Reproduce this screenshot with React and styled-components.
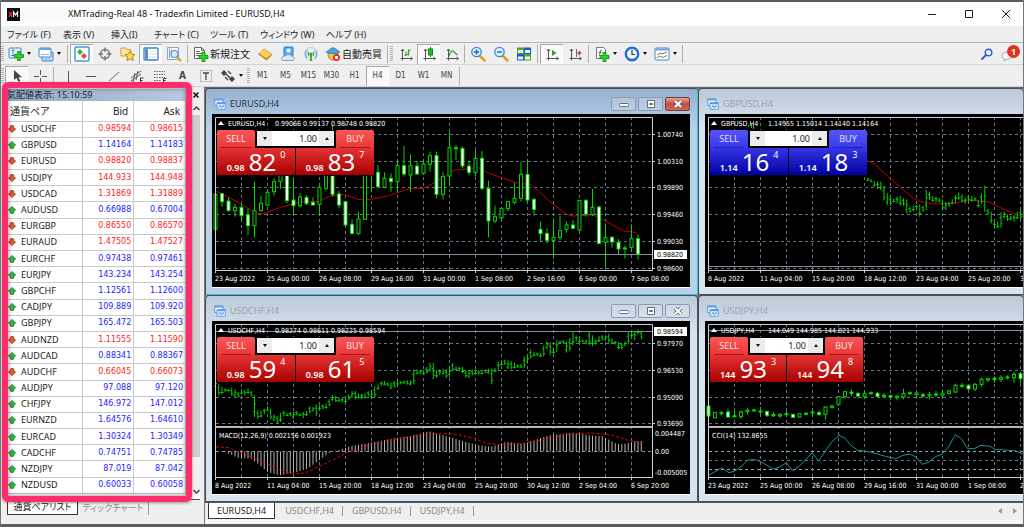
import { useState } from "react"
import styled, { createGlobalStyle, css } from "styled-components"

const GlobalStyle = createGlobalStyle`
	* {
		box-sizing: border-box;
	}
	body {
		margin: 0;
		background: #5c5c60;
		font-family: "Noto Sans", "Noto Sans CJK JP", sans-serif;
		font-size: 9px;
		line-height: 12px;
		color: #222222;
	}
	button, input {
		font: inherit;
		color: inherit;
		margin: 0;
		padding: 0;
		border: 0;
		background: none;
	}
`

/* ---------- data ---------- */

const QUOTES = [
	["USDCHF", "0.98594", "0.98615", "down"],
	["GBPUSD", "1.14164", "1.14183", "up"],
	["EURUSD", "0.98820", "0.98837", "down"],
	["USDJPY", "144.933", "144.948", "down"],
	["USDCAD", "1.31869", "1.31889", "down"],
	["AUDUSD", "0.66988", "0.67004", "up"],
	["EURGBP", "0.86550", "0.86570", "down"],
	["EURAUD", "1.47505", "1.47527", "down"],
	["EURCHF", "0.97438", "0.97461", "up"],
	["EURJPY", "143.234", "143.254", "up"],
	["GBPCHF", "1.12561", "1.12600", "up"],
	["CADJPY", "109.889", "109.920", "up"],
	["GBPJPY", "165.472", "165.503", "up"],
	["AUDNZD", "1.11555", "1.11590", "down"],
	["AUDCAD", "0.88341", "0.88367", "up"],
	["AUDCHF", "0.66045", "0.66073", "down"],
	["AUDJPY", "97.088", "97.120", "up"],
	["CHFJPY", "146.972", "147.012", "up"],
	["EURNZD", "1.64576", "1.64610", "up"],
	["EURCAD", "1.30324", "1.30349", "up"],
	["CADCHF", "0.74751", "0.74785", "up"],
	["NZDJPY", "87.019", "87.042", "up"],
	["NZDUSD", "0.60033", "0.60058", "up"],
]

/* candles: high, low, body top, body bottom, filled (thirds of a pixel) */
const EURUSD_CANDLES = [
	[253, 437, 328, 433, 0], [325, 365, 326, 350, 1], [337, 380, 348, 377, 1],
	[357, 395, 367, 377, 0], [357, 410, 367, 392, 1], [370, 450, 390, 422, 1],
	[290, 457, 377, 422, 0], [333, 380, 355, 377, 0], [312, 363, 322, 360, 0],
	[280, 332, 290, 320, 0], [270, 312, 270, 290, 0], [270, 355, 270, 347, 1],
	[283, 387, 345, 362, 1], [325, 367, 336, 362, 0], [330, 360, 337, 356, 1],
	[337, 362, 352, 360, 1], [300, 388, 307, 358, 0], [260, 315, 270, 310, 0],
	[120, 335, 265, 328, 1], [318, 370, 327, 360, 1], [347, 422, 350, 420, 1],
	[403, 450, 418, 445, 1], [380, 450, 402, 445, 0], [230, 405, 230, 403, 0],
	[240, 322, 250, 270, 0], [240, 308, 262, 305, 1], [262, 310, 280, 307, 0],
	[265, 320, 280, 290, 1], [225, 322, 242, 290, 0], [183, 275, 242, 267, 1],
	[208, 322, 242, 270, 0], [228, 270, 243, 267, 1], [225, 270, 237, 265, 0],
	[200, 260, 212, 238, 0], [200, 340, 212, 328, 1], [260, 343, 275, 328, 0],
	[138, 300, 188, 273, 0], [180, 225, 188, 191, 0], [185, 250, 190, 243, 1],
	[228, 270, 243, 262, 1], [195, 275, 220, 262, 0], [198, 315, 220, 310, 1],
	[287, 457, 310, 408, 1], [362, 413, 395, 408, 0], [368, 402, 370, 398, 0],
	[348, 378, 350, 371, 0], [293, 358, 340, 352, 0], [230, 350, 268, 340, 0],
	[225, 357, 268, 345, 1], [340, 392, 343, 373, 1], [410, 470, 433, 446, 1],
	[430, 475, 445, 466, 1], [400, 522, 457, 466, 0], [392, 465, 437, 457, 0],
	[410, 443, 420, 433, 0], [405, 432, 420, 430, 1], [345, 440, 346, 435, 0],
	[343, 395, 346, 387, 1], [312, 393, 367, 388, 0], [362, 477, 366, 476, 1],
	[415, 547, 458, 472, 0], [453, 488, 457, 471, 1], [462, 507, 472, 492, 1],
	[482, 520, 489, 492, 1], [418, 502, 461, 487, 0], [448, 523, 461, 507, 1],
]

const EURUSD_AVERAGE = [
	[32, 317], [110, 358], [150, 382], [170, 387], [230, 366], [290, 350],
	[340, 350], [370, 335], [415, 328], [440, 336], [462, 344], [500, 343],
	[550, 332], [610, 312], [655, 310], [694, 290], [735, 262], [752, 255],
	[780, 253], [820, 247], [845, 262], [895, 280], [935, 293], [980, 300],
	[1035, 350], [1085, 388], [1105, 393], [1165, 390], [1205, 410],
	[1255, 438], [1280, 440], [1297, 445],
]

/* bars: high, low (thirds of a pixel) */
const GBPUSD_BARS = [
	[278, 288], [283, 292], [288, 305], [290, 312], [290, 315], [303, 347],
	[325, 360], [335, 362], [340, 352], [335, 355], [333, 362], [340, 362],
	[343, 385], [365, 383], [362, 378], [360, 372], [358, 395], [362, 380],
	[315, 375], [320, 345], [333, 350], [335, 352], [338, 352], [343, 377],
	[350, 375], [350, 365], [343, 358], [330, 355], [322, 345], [328, 352],
	[338, 355], [330, 348], [333, 350], [338, 348], [345, 367], [325, 357],
	[302, 380], [372, 388], [380, 415], [410, 432], [410, 430], [382, 428],
	[380, 400], [388, 408], [392, 405], [390, 410], [380, 403], [373, 405],
	[390, 442],
]

const GBPUSD_AVERAGE = [
	[520, 228], [540, 238], [580, 275], [620, 310], [655, 340], [685, 352],
	[730, 357], [780, 354], [820, 345], [880, 350], [930, 375], [984, 395],
]

const USDCHF_BARS = [
	[267, 287], [275, 310], [285, 307], [290, 300], [290, 298], [287, 312],
	[292, 315], [300, 317], [292, 307], [295, 310], [290, 305], [297, 313],
	[310, 375], [355, 380], [357, 377], [350, 367], [343, 357], [350, 383],
	[367, 387], [372, 393], [363, 390], [357, 373], [363, 373], [360, 372],
	[360, 380], [357, 370], [363, 372], [360, 378], [357, 372], [343, 363],
	[345, 358], [337, 372], [340, 352], [338, 352], [335, 350], [322, 343],
	[310, 327], [312, 330], [317, 330], [318, 332], [317, 333], [307, 323],
	[297, 317], [297, 322], [305, 320], [305, 322], [303, 320], [298, 313],
	[298, 320], [283, 317], [277, 293], [268, 283], [267, 280], [272, 282],
	[272, 292], [267, 287], [263, 280], [268, 277], [265, 275], [265, 278],
	[265, 280], [232, 277], [232, 247], [235, 247], [235, 248], [225, 245],
	[212, 240], [213, 262], [235, 257], [232, 250], [230, 248], [232, 258],
	[225, 255], [213, 237], [223, 235], [225, 237], [225, 243], [233, 257],
	[235, 258], [232, 250], [232, 248], [235, 250], [235, 247], [232, 243],
	[230, 245], [230, 277], [228, 240], [210, 237], [210, 220], [203, 218],
	[205, 232], [208, 232], [212, 230], [218, 228], [215, 228], [193, 228],
	[190, 215], [172, 200], [180, 193], [182, 193], [183, 195], [160, 193],
	[148, 172], [150, 190], [168, 185], [145, 180], [145, 153], [145, 155],
	[148, 182], [138, 178], [118, 160], [130, 148], [140, 152], [143, 150],
	[143, 157], [118, 160], [130, 162], [143, 158], [132, 150], [130, 145],
	[130, 145], [125, 152], [140, 157], [147, 158], [150, 172], [152, 172],
	[148, 163], [120, 158], [118, 135], [118, 145], [112, 125], [115, 142],
]

const MACD = [
	[33, 478], [60, 480], [80, 488], [100, 497], [140, 500], [160, 515],
	[190, 540], [225, 550], [270, 542], [310, 530], [350, 500], [380, 480],
	[400, 475], [440, 462], [500, 452], [560, 440], [620, 432], [674, 418],
	[735, 435], [785, 450], [825, 460], [860, 464], [905, 450], [955, 455],
	[995, 443], [1035, 430], [1105, 422], [1155, 430], [1195, 433],
	[1235, 455], [1255, 457], [1295, 447], [1320, 447],
]

const MACD_SIGNAL = [
	[33, 465], [70, 467], [110, 483], [160, 503], [240, 540], [270, 545],
	[300, 543], [360, 515], [430, 480], [500, 457], [580, 440], [640, 430],
	[700, 425], [735, 425], [760, 428], [800, 438], [850, 455], [900, 458],
	[960, 453], [1030, 440], [1100, 425], [1160, 423], [1215, 428],
	[1270, 445], [1315, 452],
]

const USDJPY_CANDLES = [
	[340, 395, 342, 372, 1], [360, 378, 362, 377, 0], [357, 370, 362, 364, 0],
	[350, 377, 360, 375, 1], [357, 377, 371, 373, 0], [355, 380, 360, 374, 0],
	[347, 368, 355, 359, 0], [350, 357, 354, 356, 0], [345, 370, 357, 360, 0],
	[357, 375, 358, 370, 1], [360, 375, 368, 371, 1], [363, 378, 368, 372, 0],
	[357, 370, 365, 367, 0], [365, 376, 367, 376, 1], [363, 376, 365, 375, 0],
	[360, 370, 364, 366, 0], [355, 370, 360, 362, 0], [355, 372, 362, 367, 1],
	[343, 383, 345, 367, 0], [338, 350, 342, 346, 0], [312, 342, 314, 337, 0],
	[297, 320, 299, 314, 0], [293, 312, 300, 304, 1], [300, 320, 305, 312, 1],
	[298, 318, 305, 313, 0], [298, 308, 302, 304, 0], [300, 315, 304, 313, 1],
	[303, 318, 310, 312, 0], [308, 325, 311, 315, 1], [308, 325, 313, 317, 0],
	[290, 322, 305, 315, 0], [298, 308, 302, 304, 0], [298, 315, 303, 308, 0],
	[303, 318, 308, 312, 1], [300, 322, 308, 312, 0], [297, 315, 306, 308, 0],
	[293, 315, 304, 310, 0], [293, 308, 297, 304, 0], [275, 302, 280, 300, 0],
	[273, 288, 280, 282, 0], [278, 295, 280, 291, 1], [273, 297, 277, 291, 0],
	[257, 285, 262, 277, 0], [257, 270, 260, 264, 0], [253, 272, 259, 263, 1],
	[250, 270, 257, 262, 0], [250, 262, 255, 257, 0], [240, 272, 247, 257, 0],
	[240, 275, 245, 260, 1],
]

const CCI = [
	[41, 550], [80, 528], [102, 542], [118, 538], [140, 522], [157, 505],
	[176, 502], [196, 508], [235, 531], [255, 525], [274, 512], [293, 537],
	[312, 523], [351, 483], [371, 507], [410, 450], [432, 430], [449, 438],
	[468, 460], [488, 475], [527, 480], [560, 490], [602, 500], [624, 490],
	[645, 486], [663, 495], [682, 517], [702, 510], [721, 494], [741, 487],
	[760, 465], [781, 428], [799, 440], [818, 470], [838, 470], [857, 460],
	[885, 463], [900, 472], [960, 476], [990, 489],
]

const SHORT_DATES = [
	"23 Aug 2022", "25 Aug 00:00", "26 Aug 08:00", "29 Aug 16:00",
	"31 Aug 00:00", "1 Sep 08:00", "2 Sep 16:00", "6 Sep 00:00", "7 Sep 08:00",
]
const LONG_DATES = [
	"8 Aug 2022", "11 Aug 04:00", "15 Aug 20:00", "18 Aug 12:00",
	"23 Aug 04:00", "25 Aug 20:00", "30 Aug 12:00", "2 Sep 04:00", "6 Sep 20:00",
]

const FULL_GRID = [148, 227, 307, 387, 468, 548]
const HALF_GRID = [154, 234, 314, 394]

const CHARTS = [
	{
		symbol: "EURUSD,H4",
		quote: "0.99066 0.99137 0.98748 0.98820",
		active: true,
		dates: SHORT_DATES,
		grid: FULL_GRID,
		prices: ["1.00740", "1.00310", "0.99890", "0.99460", "0.99030", "0.98600"],
		last: { y: 508, text: "0.98820" },
		shift: 7,
		candles: EURUSD_CANDLES,
		average: EURUSD_AVERAGE,
		base: "0.98",
		sell: ["82", "0"],
		buy: ["83", "7"],
	},
	{
		symbol: "GBPUSD,H4",
		quote: "1.14955 1.15014 1.14140 1.14164",
		blue: true,
		dates: LONG_DATES,
		grid: FULL_GRID,
		last: { y: 545 },
		shift: 10,
		bars: GBPUSD_BARS,
		firstBar: 49,
		average: GBPUSD_AVERAGE,
		base: "1.14",
		sell: ["16", "4"],
		buy: ["18", "3"],
	},
	{
		symbol: "USDCHF,H4",
		quote: "0.98274 0.98611 0.98225 0.98594",
		dates: LONG_DATES,
		grid: HALF_GRID,
		prices: ["0.97970", "0.96530", "0.95090", "0.93690"],
		last: { y: 118, text: "0.98594" },
		shift: 7,
		bars: USDCHF_BARS,
		firstBar: 0,
		macd: true,
		base: "0.98",
		sell: ["59", "4"],
		buy: ["61", "5"],
	},
	{
		symbol: "USDJPY,H4",
		quote: "144.049 144.985 144.021 144.933",
		narrow: true,
		dates: SHORT_DATES,
		grid: HALF_GRID,
		last: { y: 116 },
		shift: 10,
		candles: USDJPY_CANDLES,
		cci: true,
		base: "144",
		sell: ["93", "3"],
		buy: ["94", "8"],
	},
]

/* ---------- icons ---------- */

const Icon = ({ children, size = 16 }) => (
	<svg width={size} height={size} viewBox="0 0 16 16" fill="none" aria-hidden="true">
		{children}
	</svg>
)

const Plus = ({ x = 0, y = 0 }) => (
	<path
		d={`M${x + 3} ${y}h3v3h3v3h-3v3h-3v-3h-3v-3h3z`}
		fill="#2bd42b"
		stroke="#0a8a0a"
		strokeWidth="0.8"
	/>
)

const Axes = ({ children }) => (
	<Icon>
		<path d="M4.500 3v11.500M2.500 12.500h12M3 5l1.500-2 1.500 2M12.500 11l2 1.500-2 1.500" stroke="#555" />
		{children}
	</Icon>
)

const Lens = ({ sign }) => (
	<Icon>
		<path d="M10 10l4.500 4.500" stroke="#d9a520" strokeWidth="2.600" strokeLinecap="round" />
		<circle cx="6.500" cy="6" r="4.700" fill="#d8efff" stroke="#3a86d0" strokeWidth="1.300" />
		<path d={sign === "+" ? "M4 6h5M6.500 3.500v5" : "M4 6h5"} stroke="#1f66bb" strokeWidth="1.400" />
	</Icon>
)

const icons = {
	addChart: (
		<Icon>
			<rect x="1" y="2" width="12" height="10" rx="1" fill="#eaf5ff" stroke="#3f88cc" />
			<path d="M5 3.500v7M3.500 5L5 3.500 6.500 5M3 9.500h7" stroke="#3f88cc" />
			<Plus x={6.5} y={5.5} />
		</Icon>
	),
	profiles: (
		<Icon>
			<rect x="4" y="6" width="11" height="9" rx="1" fill="#cfe4f8" stroke="#3f78bb" />
			<rect x="1" y="2" width="12" height="9" rx="1" fill="#fff" stroke="#3f88cc" />
			<path d="M1.500 3h11" stroke="#5fa5e4" strokeWidth="2" />
			<path d="M3 8.500h8M6 13h7" stroke="#8ab9e6" />
		</Icon>
	),
	market: (
		<Icon>
			<rect x="1" y="1" width="14" height="14" rx="1" fill="#fff" stroke="#4a97df" strokeWidth="1.500" />
			<path d="M6 3l3 3-3 3-3-3z" fill="#35b535" />
			<path d="M10 7l3 3-3 3-3-3z" fill="#e25035" />
		</Icon>
	),
	target: (
		<Icon>
			<circle cx="8" cy="8" r="4.500" stroke="#777" strokeWidth="1.400" />
			<path d="M8 1.500v4.500M8 10v4.500M1.500 8h4.500M10 8h4.500" stroke="#777" strokeWidth="1.400" />
		</Icon>
	),
	favorites: (
		<Icon>
			<path d="M1 2h5l1 1.500h4V10H1z" fill="#ffe9a0" stroke="#cf9f36" />
			<path d="M10 5l1.600 3.200 3.400.4-2.500 2.400.7 3.500-3.200-1.700-3.200 1.700.7-3.500L5 8.600l3.400-.4z" fill="#ffd94a" stroke="#b8841d" />
		</Icon>
	),
	terminal: (
		<Icon>
			<rect x="1" y="2" width="14" height="12" rx="1" fill="#fff" stroke="#3f7fc4" strokeWidth="1.300" />
			<path d="M2 3h3v10H2z" fill="#4c8fd6" />
			<path d="M6.500 5h7M6.500 8h7M6.500 11h7" stroke="#c9dcf0" />
			<path d="M3 5h1M3 8h1" stroke="#e55" />
		</Icon>
	),
	tester: (
		<Icon>
			<path d="M1.500 1.500h11v12h-11z" fill="#f4f8ff" stroke="#8aa6c8" />
			<path d="M3.500 3v9M5.500 4v7" stroke="#6aa0dc" />
			<path d="M11 11l3.500 3.500" stroke="#d9a520" strokeWidth="2.200" strokeLinecap="round" />
			<circle cx="8.500" cy="8" r="3.500" fill="#d5ecff" stroke="#6c8fb8" strokeWidth="1.200" />
		</Icon>
	),
	order: (
		<Icon>
			<path d="M1.500 1.500h7l3 3v8h-10z" fill="#fff" stroke="#666" />
			<path d="M8.500 1.500v3h3M3 5.500h4M3 7.500h6M3 9.500h4" stroke="#666" />
			<Plus x={6} y={6.5} />
		</Icon>
	),
	gold: (
		<Icon>
			<path d="M1.500 8L7 3l8 5.500-5.500 5.500z" fill="#d99a22" stroke="#9d6a0b" strokeWidth="0.800" />
			<path d="M2 7.500L7 3l7.500 5L9.500 12z" fill="#ffd05c" />
		</Icon>
	),
	community: (
		<Icon>
			<rect x="4" y="1" width="9" height="9" rx="1" fill="#58b1ee" stroke="#1d76c4" />
			<circle cx="8.500" cy="4.500" r="1.900" fill="#fff" />
			<path d="M2.500 14.500c-2-1-1-4 1.500-4C6 8 11 8 12 10.500c3 0 3 3.500 1 4z" fill="#dbe9f7" stroke="#7d9fc4" />
		</Icon>
	),
	signal: (
		<Icon>
			<circle cx="8" cy="8" r="6.500" stroke="#b4cbe0" />
			<path d="M4.500 12a5 5 0 010-8M11.500 12a5 5 0 000-8" stroke="#6fb2e4" strokeWidth="1.300" />
			<path d="M6 10a3 3 0 010-4M10 10a3 3 0 000-4" stroke="#46b04a" strokeWidth="1.200" />
			<circle cx="8" cy="8" r="1.600" fill="#2ca52c" />
			<path d="M8 9v6" stroke="#2ca52c" strokeWidth="1.800" />
		</Icon>
	),
	auto: (
		<Icon>
			<circle cx="8" cy="9" r="5" fill="#f2c544" stroke="#b88316" />
			<path d="M1 6c3 2 11 2 14 0-1-1-2-1-3-1.500C11 1 5 1 4 4.500 3 5 2 5 1 6z" fill="#4aa2df" stroke="#1f71b2" strokeWidth="0.800" />
			<circle cx="11.500" cy="11.500" r="3.500" fill="#e4321c" />
			<path d="M10 10h3v3h-3z" fill="#fff" />
		</Icon>
	),
	barChart: (
		<Axes>
			<path d="M8 10V5.500M6.500 9.500h1.500M10.500 3.500v6M8 8.500h2.500M10.500 4.500h2" stroke="#27a327" strokeWidth="1.200" />
		</Axes>
	),
	candleChart: (
		<Axes>
			<path d="M9.500 1v10" stroke="#128a12" />
			<rect x="7.500" y="3" width="4" height="6" fill="#22c022" stroke="#128a12" />
		</Axes>
	),
	lineChart: (
		<Axes>
			<path d="M5 10c2-6 4-6 5-4l3.500 3" stroke="#27a327" strokeWidth="1.200" />
		</Axes>
	),
	zoomIn: <Lens sign="+" />,
	zoomOut: <Lens sign="-" />,
	tile: (
		<Icon>
			<path d="M1 1.500h7v6.500H1zM8 8h7v6.500H8z" fill="#4aa82c" />
			<path d="M8 1.500h7v6.500H8zM1 8h7v6.500H1z" fill="#2456bf" />
			<path d="M2 4h5v3H2zM9 4h5v3H9zM2 10.500h5v3H2zM9 10.500h5v3H9z" fill="#eef5ff" />
		</Icon>
	),
	scroll: (
		<Axes>
			<path d="M8 4l4.500 3L8 10z" fill="#22a922" />
		</Axes>
	),
	shiftEnd: (
		<Axes>
			<path d="M9.500 3v8" stroke="#3a70b8" />
			<path d="M14.500 7h-3M13 5l-2 2 2 2" stroke="#cc4325" strokeWidth="1.300" />
		</Axes>
	),
	indicator: (
		<Icon>
			<path d="M2.500 1.500h7l2 2v9h-9z" fill="#fff" stroke="#777" />
			<path d="M8 4C5.500 3 6.500 9 5 10M4.500 6.500h3" stroke="#555" />
			<Plus x={6} y={6.5} />
		</Icon>
	),
	clock: (
		<Icon>
			<circle cx="8" cy="8" r="6.200" fill="#eef7ff" stroke="#1f6fcb" strokeWidth="2.400" />
			<path d="M8 4v4.500h3" stroke="#335" strokeWidth="1.200" />
		</Icon>
	),
	template: (
		<Icon>
			<rect x="1" y="2" width="14" height="12" rx="1" fill="#fff" stroke="#4a88c8" />
			<path d="M1.500 3.500h13" stroke="#66a6e2" strokeWidth="2" />
			<path d="M3 9l3-2 2 1 5-2" stroke="#c2573d" />
			<path d="M3 12l3-2 3 1.500 4-2" stroke="#3b9f4a" />
		</Icon>
	),
	cursor: (
		<Icon>
			<path d="M5 2v10l2.500-2 2 4 1.800-1-2-3.800H13z" fill="#444" />
		</Icon>
	),
	cross: (
		<Icon>
			<path d="M8.500 2v5M8.500 10v5M2 8.500h5M10 8.500h5" stroke="#555" />
		</Icon>
	),
	vertical: (
		<Icon>
			<path d="M8.500 3v11" stroke="#555" />
		</Icon>
	),
	horizontal: (
		<Icon>
			<path d="M3 8.500h10" stroke="#555" />
		</Icon>
	),
	trend: (
		<Icon>
			<path d="M3 13L13 4" stroke="#666" />
		</Icon>
	),
	channel: (
		<Icon>
			<path d="M2 10l10-7M2 13l10-7M4 14l2-9M7 12l2-9" stroke="#555" />
			<path d="M14.500 10h-3v5h3M11.500 12.500h2" stroke="#333" />
		</Icon>
	),
	fibo: (
		<Icon>
			<path d="M2 3.500h11M2 6.500h11M2 9.500h11M2 12.500h7" stroke="#666" strokeDasharray="1.500 1" />
			<path d="M14.500 10.500h-3v4.500M11.500 12.500h2" stroke="#333" />
		</Icon>
	),
	label: (
		<Icon>
			<path d="M2.500 2.500h11v11h-11z" stroke="#888" strokeDasharray="1 1" />
			<path d="M5 5h6M8 5v7" stroke="#444" strokeWidth="1.300" />
		</Icon>
	),
	shapes: (
		<Icon>
			<path d="M1 5l3-3 3 3-3 3zM9 11l3-3 3 3-3 3z" fill="#444" />
			<path d="M8 3l3 3M5 9l3 3M6 6l4 4" stroke="#444" strokeWidth="1.300" />
		</Icon>
	),
}

const ChartGlyph = () => (
	<Icon size={12}>
		<rect x="1" y="1" width="11" height="9" rx="1" fill="#fff" stroke="#5a9be6" strokeWidth="1.400" />
		<path d="M1 2.500h11" stroke="#5a9be6" strokeWidth="2" />
		<rect x="4" y="6" width="11" height="9" rx="1" fill="#fff" stroke="#5a9be6" strokeWidth="1.400" />
		<path d="M4 7.500h11M6 13l2-3 2 3 2-3 1 2" stroke="#5a9be6" strokeWidth="1.400" />
	</Icon>
)

const TickMark = ({ direction }) => (
	<svg width="8" height="8" viewBox="0 0 8 8" role="img" aria-label={direction}>
		{direction === "up" ? (
			<path d="M4 .4l3.600 3.600-1.800.8V7L4 7.600 2.200 7V4.800L.4 4z" fill="#2fb83c" stroke="#0e7a1c" strokeWidth="0.800" />
		) : (
			<path d="M4 7.600l3.600-3.600-1.800-.8V1L4 .4 2.200 1v2.200L.4 4z" fill="#ea5a2c" stroke="#9b2c0c" strokeWidth="0.800" />
		)}
	</svg>
)

/* ---------- chart drawing ---------- */

const py = (v) => v / 3 - 29

const toPoints = (list, shift) =>
	list.map(([x, y]) => `${x / 3 - shift},${py(y)}`).join(" ")

const valueAt = (list, x) => {
	const next = list.findIndex((p) => p[0] >= x)
	if (next < 1) return list[0][1]
	const [x0, y0] = list[next - 1]
	const [x1, y1] = list[next]
	return y0 + ((y1 - y0) * (x - x0)) / (x1 - x0)
}

const Candle = ({ x, data }) => {
	const [high, low, top, bottom, filled] = data
	return (
		<g stroke="#00d800">
			<path d={`M${x} ${py(high)}V${py(low)}`} />
			<rect
				x={x - 1.5}
				y={py(top)}
				width="3"
				height={Math.max(1, (bottom - top) / 3)}
				fill={filled ? "#ffffff" : "#000000"}
			/>
		</g>
	)
}

const Plot = ({ chart }) => {
	const { shift, grid, last, dates } = chart
	const right = chart.prices ? 440 : 500
	const split = chart.macd || chart.cci
	const columns = Array.from({ length: 18 }, (_, i) => 29.5 + i * 26).filter((x) => x < right)

	return (
		<StyledPlot role="img" aria-label={chart.symbol}>
			<g stroke="#66727f" strokeDasharray="3 3">
				{columns.map((x) => (
					<path key={x} d={`M${x} 3V156`} />
				))}
				{grid.map((y) => (
					<path key={y} d={`M4 ${Math.round(py(y)) + 0.5}H${right}`} />
				))}
				{chart.cci && <path d="M4 139.500H500" />}
			</g>
			<path d={`M4 ${Math.floor(py(last.y)) + 0.5}H${right}`} stroke="#8390a2" />

			{chart.average && (
				<polyline points={toPoints(chart.average, shift)} fill="none" stroke="#c00000" />
			)}
			{chart.candles?.map((data, i) => (
				<Candle key={i} x={3.5 + i * 6.5} data={data} />
			))}
			{chart.bars && (
				<path
					stroke="#00d000"
					d={chart.bars
						.map(([high, low], i) => {
							const x = 3.5 + (chart.firstBar + i) * 3.25
							const open = py(high) + (low - high) / (i % 2 ? 9 : 4)
							const close = py(low) - (low - high) / (i % 3 ? 12 : 5)
							return `M${x} ${py(high)}V${py(low)}M${x - 1.5} ${open}h1.500M${x} ${close}h1.500`
						})
						.join("")}
				/>
			)}
			{chart.blue && <path d="M3.500 36V45M46.500 10v4M48.500 12v3" stroke="#00d000" />}

			{chart.macd && (
				<>
					<path d="M4 130.500H440" stroke="#8c8c8c" strokeDasharray="3 3" />
					<path
						stroke="#b4b4b4"
						d={Array.from({ length: 132 }, (_, i) => {
							const x = 3.5 + i * 3.25
							return `M${x} 130.500V${py(valueAt(MACD, 33 + i * 9.75))}`
						}).join("")}
					/>
					<polyline points={toPoints(MACD_SIGNAL, shift)} fill="none" stroke="#e00000" strokeDasharray="3 2" />
				</>
			)}
			{chart.cci && (
				<>
					<path d="M4 130.500H500M4 148.500H500" stroke="#9aa3ab" strokeDasharray="3 3" />
					<polyline points={toPoints(CCI, shift)} fill="none" stroke="#1f9090" />
				</>
			)}

			<path d={`M3.500 156.500V3.500H${right}.500V156.500z`} fill="none" stroke="#d0d0d0" />
			{split && <path d={`M3 106H${right + 1}`} stroke="#b8b8b8" strokeWidth="2" />}
			{dates.map((date, i) => (
				<g key={date}>
					<path d={`M${3.5 + i * 52} 157v2`} stroke="#d0d0d0" />
					<text x={3 + i * 52} y="167">{date}</text>
				</g>
			))}
			{chart.prices?.map((price, i) => (
				<g key={price}>
					<path d={`M441 ${Math.round(py(grid[i])) + 0.5}h2`} stroke="#d0d0d0" />
					<text x="445" y={Math.round(py(grid[i])) + 3}>{price}</text>
				</g>
			))}
			{last.text && (
				<>
					<rect x="442" y={Math.round(py(last.y)) - 4} width="33" height="9" fill="#ffffff" />
					<text x="445" y={Math.round(py(last.y)) + 3} className="last">{last.text}</text>
				</>
			)}
			{chart.macd && (
				<>
					<text x="443" y="115">0.004487</text>
					<text x="443" y="133">0.00</text>
					<text x="443" y="154">-0.005005</text>
					<text x="7" y="117">MACD(12,26,9) 0.002156 0.001923</text>
				</>
			)}
			{chart.cci && <text x="7" y="117">CCI(14) 132.8655</text>}
			<path d="M6 11h6l-3-4z" fill="#ffffff" />
			<text x="16" y="12">{chart.symbol}</text>
			<text x="63" y="12">{chart.quote}</text>
		</StyledPlot>
	)
}

/* ---------- pieces ---------- */

const Tool = ({ icon, label, pressed, drop, text }) => (
	<StyledTool type="button" aria-label={label} $pressed={pressed} $drop={drop} $wide={!!text}>
		{icons[icon]}
		{text}
		{drop && <Caret />}
	</StyledTool>
)

const OneClick = ({ chart }) => (
	<StyledOneClick $narrow={chart.narrow}>
		<StyledOrderRow>
			<StyledSide type="button" $blue={chart.blue}>SELL</StyledSide>
			<StyledVolume>
				<button type="button" aria-label="Decrease volume"><Caret /></button>
				<input aria-label={`${chart.symbol} volume`} defaultValue="1.00" />
				<button type="button" aria-label="Increase volume"><Caret $up /></button>
			</StyledVolume>
			<StyledSide type="button" $blue={chart.blue}>BUY</StyledSide>
		</StyledOrderRow>
		<StyledPriceRow>
			{[chart.sell, chart.buy].map(([big, pip], i) => (
				<StyledPrice key={i} type="button" $blue={chart.blue}>
					<small>{chart.base}</small>
					<strong>{big}</strong>
					<sup>{pip}</sup>
				</StyledPrice>
			))}
		</StyledPriceRow>
	</StyledOneClick>
)

const ChartWindow = ({ chart }) => (
	<StyledWindow $active={chart.active}>
		<StyledWindowBar $active={chart.active}>
			<ChartGlyph />
			<span>{chart.symbol}</span>
			{chart.prices && (
				<StyledWindowButtons>
					<StyledWindowButton type="button" aria-label="Minimize">
						<svg width="10" height="8"><rect x="0.500" y="3.500" width="9" height="3" rx="1" fill="#fff" stroke="#66707c" /></svg>
					</StyledWindowButton>
					<StyledWindowButton type="button" aria-label="Maximize">
						<svg width="10" height="8"><path d="M1.500 0.500h7v7h-7zM3.500 3.500h3v1h-3z" fill="#fff" stroke="#66707c" /></svg>
					</StyledWindowButton>
					<StyledWindowButton type="button" aria-label="Close" $close={chart.active}>
						<svg width="10" height="8">
							<path d="M2 1l6 6M8 1L2 7" stroke="#5f6672" strokeWidth="3.600" />
							<path d="M2 1l6 6M8 1L2 7" stroke="#fff" strokeWidth="2" />
						</svg>
					</StyledWindowButton>
				</StyledWindowButtons>
			)}
		</StyledWindowBar>
		<StyledCanvas>
			<Plot chart={chart} />
			<OneClick chart={chart} />
		</StyledCanvas>
	</StyledWindow>
)

const MarketWatch = () => (
	<StyledAside>
		<StyledPanelTitle>
			<span>気配値表示: 15:10:59</span>
			<button type="button" aria-label="Close panel">
				<svg width="6" height="6"><path d="M0.500 0.500l5 5M5.500 0.500l-5 5" stroke="#111" strokeWidth="1.500" /></svg>
			</button>
		</StyledPanelTitle>
		<StyledPanelBody>
			<StyledTable>
				<thead>
					<tr>
						<th scope="col">通貨ペア</th>
						<th scope="col">Bid</th>
						<th scope="col">Ask</th>
					</tr>
				</thead>
				<tbody>
					{QUOTES.map(([name, bid, ask, direction]) => (
						<StyledQuote key={name} $up={direction === "up"}>
							<th scope="row"><TickMark direction={direction} />{name}</th>
							<td>{bid}</td>
							<td>{ask}</td>
						</StyledQuote>
					))}
				</tbody>
			</StyledTable>
			<StyledScroll>
				<svg width="7" height="5"><path d="M0.500 4l3-3 3 3" fill="none" stroke="#444" strokeWidth="1.500" /></svg>
				<StyledThumb />
				<svg width="7" height="5"><path d="M0.500 1l3 3 3-3" fill="none" stroke="#444" strokeWidth="1.500" /></svg>
			</StyledScroll>
		</StyledPanelBody>
		<StyledPanelTabs>
			<StyledPanelTab type="button" $active>通貨ペアリスト</StyledPanelTab>
			<StyledPanelTab type="button">ティックチャート</StyledPanelTab>
		</StyledPanelTabs>
		<StyledHighlight />
	</StyledAside>
)

const App = () => {
	const [tab, setTab] = useState("EURUSD,H4")

	return (
		<StyledFrame>
			<GlobalStyle />
			<StyledTitleBar>
				<svg width="13" height="13" viewBox="0 0 13 13">
					<rect width="13" height="13" fill="#0b0b0b" />
					<path d="M2 4l3 5M5 4L2 9" stroke="#e33" strokeWidth="1.300" />
					<path d="M6.500 9V4l2 3 2-3v5" fill="none" stroke="#fff" strokeWidth="1.200" />
				</svg>
				<StyledAccount />
				<StyledTitle>XMTrading-Real 48 - Tradexfin Limited - EURUSD,H4</StyledTitle>
				<StyledSystemButtons>
					<button type="button" aria-label="Minimize"><svg width="10" height="10"><path d="M1 5.500h8" stroke="#222" /></svg></button>
					<button type="button" aria-label="Maximize"><svg width="10" height="10"><path d="M1.500 1.500h7v7h-7z" fill="none" stroke="#222" /></svg></button>
					<button type="button" aria-label="Close"><svg width="10" height="10"><path d="M1 1l8 8M9 1L1 9" stroke="#222" /></svg></button>
				</StyledSystemButtons>
			</StyledTitleBar>

			<StyledMenu>
				<StyledMenuItem type="button" $width={56}>ファイル (F)</StyledMenuItem>
				<StyledMenuItem type="button" $width={48}>表示 (V)</StyledMenuItem>
				<StyledMenuItem type="button" $width={43}>挿入(I)</StyledMenuItem>
				<StyledMenuItem type="button" $width={56}>チャート (C)</StyledMenuItem>
				<StyledMenuItem type="button" $width={50}>ツール (T)</StyledMenuItem>
				<StyledMenuItem type="button" $width={66}>ウィンドウ (W)</StyledMenuItem>
				<StyledMenuItem type="button" $width={56}>ヘルプ (H)</StyledMenuItem>
			</StyledMenu>

			<StyledToolbar>
				<Grip />
				<Tool icon="addChart" label="New chart" drop />
				<Tool icon="profiles" label="Profiles" drop />
				<Separator />
				<Tool icon="market" label="Market watch" pressed />
				<Tool icon="target" label="Data window" />
				<Tool icon="favorites" label="Navigator" />
				<Tool icon="terminal" label="Terminal" pressed />
				<Tool icon="tester" label="Strategy tester" />
				<Separator />
				<Tool icon="order" text="新規注文" />
				<Tool icon="gold" label="MetaEditor" />
				<Tool icon="community" label="Community" />
				<Tool icon="signal" label="Signals" />
				<Tool icon="auto" text="自動売買" />
				<Separator />
				<Grip />
				<Tool icon="barChart" label="Bar chart" />
				<Tool icon="candleChart" label="Candlesticks" pressed />
				<Tool icon="lineChart" label="Line chart" />
				<Separator $tight />
				<Tool icon="zoomIn" label="Zoom in" />
				<Tool icon="zoomOut" label="Zoom out" />
				<Tool icon="tile" label="Tile windows" />
				<Separator />
				<Tool icon="scroll" label="Auto scroll" pressed />
				<Tool icon="shiftEnd" label="Chart shift" />
				<Separator />
				<Tool icon="indicator" label="Indicators" drop />
				<Tool icon="clock" label="Periods" drop />
				<Tool icon="template" label="Templates" drop />
				<Separator $tight />
				<StyledToolbarEnd>
					<button type="button" aria-label="Search">
						<svg width="12" height="12" viewBox="0 0 12 12" fill="none">
							<path d="M1 11l4-4" stroke="#2e62c9" strokeWidth="2" strokeLinecap="round" />
							<circle cx="7.500" cy="4.500" r="3.300" fill="#eef5ff" stroke="#2e62c9" strokeWidth="1.400" />
						</svg>
					</button>
					<StyledMessages type="button" aria-label="Messages">
						<svg width="14" height="14" viewBox="0 0 14 14"><path d="M1 7c0-4 12-4 12 0 0 3-4 4-7 4l-3 2v-2.500C2 10 1 9 1 7z" fill="#f6f6f8" stroke="#a5a8b0" /></svg>
						<span>1</span>
					</StyledMessages>
				</StyledToolbarEnd>
			</StyledToolbar>

			<StyledToolbar>
				<Grip />
				<Tool icon="cursor" label="Cursor" pressed />
				<Tool icon="cross" label="Crosshair" />
				<Separator />
				<Tool icon="vertical" label="Vertical line" />
				<Tool icon="horizontal" label="Horizontal line" />
				<Tool icon="trend" label="Trendline" />
				<Tool icon="channel" label="Channel" />
				<Tool icon="fibo" label="Fibonacci" />
				<StyledPeriod type="button" $strong>A</StyledPeriod>
				<Tool icon="label" label="Text label" />
				<Tool icon="shapes" label="Arrows" drop />
				<Grip />
				{["M1", "M5", "M15", "M30", "H1", "H4", "D1", "W1", "MN"].map((period) => (
					<StyledPeriod key={period} type="button" $pressed={period === "H4"}>
						{period}
					</StyledPeriod>
				))}
				<Separator $tight />
			</StyledToolbar>

			<StyledMain>
				<MarketWatch />
				<StyledWorkspace>
					<StyledWindows>
						{CHARTS.map((chart) => (
							<ChartWindow key={chart.symbol} chart={chart} />
						))}
					</StyledWindows>
					<StyledTabs>
						{["EURUSD,H4", "USDCHF,H4", "GBPUSD,H4", "USDJPY,H4"].map((name) => (
							<StyledTab key={name} type="button" $active={tab === name} onClick={() => setTab(name)}>
								{name}
							</StyledTab>
						))}
						<StyledTabArrows>
							<button type="button" aria-label="Previous tabs"><svg width="4" height="6"><path d="M4 0v6L0 3z" fill="#999" /></svg></button>
							<button type="button" aria-label="Next tabs"><svg width="4" height="6"><path d="M0 0v6l4-3z" fill="#999" /></svg></button>
						</StyledTabArrows>
					</StyledTabs>
				</StyledWorkspace>
			</StyledMain>
		</StyledFrame>
	)
}

/* ---------- styles ---------- */

const StyledFrame = styled.div`
	display: flex;
	flex-direction: column;
	height: 100vh;
	min-height: 500px;
	padding-top: 2px;
	border: solid #77777b;
	border-width: 0 1px;
	border-bottom: 3px solid #5c5c60;
	background: #efefef;
	box-shadow: inset 0 2px #5c5c60;
	overflow: hidden;
`

const StyledTitleBar = styled.header`
	display: flex;
	align-items: center;
	height: 24px;
	padding: 0 6px;
	background: #ffffff;
	flex-shrink: 0;
`

const StyledAccount = styled.span`
	width: 44px;
	height: 14px;
	margin: 0 2px;
	background: #fafafa;
`

const StyledTitle = styled.h1`
	margin: 0;
	font-size: 9px;
	font-weight: 400;
	color: #111111;
`

const StyledSystemButtons = styled.div`
	display: flex;
	gap: 27px;
	margin-left: auto;
	padding-right: 6px;
	button {
		display: flex;
	}
`

const StyledMenu = styled.nav`
	display: flex;
	height: 17px;
	padding-left: 6px;
	border-bottom: 1px solid #b4b4b4;
	flex-shrink: 0;
`

const StyledMenuItem = styled.button`
	width: ${({ $width }) => $width}px;
	text-align: left;
	white-space: nowrap;
	font-feature-settings: "palt";
	&& {
		line-height: 15px;
	}
`

const StyledToolbar = styled.div`
	display: flex;
	align-items: center;
	height: 22px;
	flex-shrink: 0;
	border-bottom: 1px solid #d2d2d2;
`

const Grip = styled.span`
	width: 3px;
	height: 16px;
	margin: 0 1px 0 0;
	background: repeating-linear-gradient(#b0b0b0 0 1px, #efefef 1px 2px);
`

const Separator = styled.span`
	width: 1px;
	height: 18px;
	margin: 0 ${({ $tight }) => ($tight ? 1 : 2)}px;
	background: #b0b0b0;
`

const Caret = styled.i`
	width: 0;
	height: 0;
	border: 2px solid transparent;
	border-top: ${({ $up }) => ($up ? "0" : "3px solid #111111")};
	border-bottom: ${({ $up }) => ($up ? "3px solid #111111" : "0")};
`

const pressedStyle = css`
	background: #f9f9f9;
	box-shadow: inset 1px 1px #a8a8a8, inset -1px -1px #ffffff;
`

const StyledTool = styled.button`
	display: flex;
	align-items: center;
	justify-content: ${({ $wide, $drop }) => ($wide || $drop ? "flex-start" : "center")};
	gap: ${({ $drop }) => ($drop ? 3 : 1)}px;
	flex-shrink: 0;
	width: ${({ $wide, $drop }) => ($wide ? 63 : $drop ? 30 : 23)}px;
	height: 20px;
	padding-left: ${({ $wide, $drop }) => ($wide || $drop ? 3 : 0)}px;
	white-space: nowrap;
	&& {
		font-size: 10px;
	}
	svg {
		flex-shrink: 0;
	}
	${({ $pressed }) => $pressed && pressedStyle}
`

const StyledPeriod = styled.button`
	width: 23px;
	height: 20px;
	flex-shrink: 0;
	color: #444444;
	&& {
		font-family: "DejaVu Sans Condensed", "DejaVu Sans", sans-serif;
		font-size: ${({ $strong }) => ($strong ? 10 : 8)}px;
		font-weight: ${({ $strong }) => ($strong ? 700 : 400)};
	}
	${({ $pressed }) => $pressed && pressedStyle}
`

const StyledToolbarEnd = styled.div`
	display: flex;
	align-items: center;
	gap: 8px;
	margin-left: auto;
	padding-right: 3px;
	button {
		display: flex;
	}
`

const StyledMessages = styled.button`
	position: relative;
	width: 19px;
	padding-top: 2px;
	span {
		position: absolute;
		top: -1px;
		right: 0;
		width: 13px;
		height: 13px;
		border-radius: 50%;
		background: #e0321c;
		color: #ffffff;
		font-weight: 700;
		line-height: 13px;
		text-align: center;
	}
`

const StyledMain = styled.main`
	display: flex;
	flex: 1;
	min-height: 0;
`

const StyledAside = styled.aside`
	position: relative;
	display: flex;
	flex-direction: column;
	width: 203px;
	flex-shrink: 0;
	padding: 1px 4px 0 6px;
`

const StyledPanelTitle = styled.div`
	display: flex;
	align-items: center;
	height: 13px;
	flex-shrink: 0;
	span {
		width: 180px;
		background: linear-gradient(90deg, #93a9c4, #b5cbe4);
		color: #1c2430;
		white-space: nowrap;
	}
	button {
		display: flex;
		margin-left: 6px;
	}
`

const StyledPanelBody = styled.div`
	display: flex;
	flex: 1;
	min-height: 0;
	padding-bottom: 5px;
	border-bottom: 1px solid #555555;
	background: #ffffff;
`

const StyledTable = styled.table`
	width: 179px;
	height: 100%;
	border-collapse: collapse;
	table-layout: fixed;
	th, td {
		padding: 0 2px 0 0;
		border: solid #c9c9c9;
		border-width: 0 1px 1px 0;
		font-weight: 400;
		text-align: right;
	}
	th:first-child {
		width: 75px;
		text-align: left;
	}
	thead th {
		height: 20px;
		padding: 0 5px 0 3px;
		font-size: 10px;
		font-feature-settings: "palt";
	}
`

const StyledQuote = styled.tr`
	th svg {
		margin: 0 5px 0 1px;
		vertical-align: -1px;
	}
	td {
		font-family: "DejaVu Sans", sans-serif;
		font-size: 8px;
		color: ${({ $up }) => ($up ? "#2323ff" : "#ff2323")};
	}
`

const StyledScroll = styled.div`
	display: flex;
	flex-direction: column;
	align-items: center;
	justify-content: space-between;
	flex: 1;
	padding: 5px 0 0 6px;
	background: #f1f1f1;
`

const StyledThumb = styled.span`
	flex: 1;
	width: 8px;
	margin: 4px 0 32px;
	background: #cdcdcd;
`

const StyledPanelTabs = styled.div`
	display: flex;
	align-items: flex-start;
	height: 24px;
	flex-shrink: 0;
`

const StyledPanelTab = styled.button`
	height: 15px;
	width: 71px;
	white-space: nowrap;
	font-feature-settings: "palt";
	color: ${({ $active }) => ($active ? "#222222" : "#8a8a8a")};
	background: ${({ $active }) => ($active ? "#ffffff" : "none")};
	border: solid ${({ $active }) => ($active ? "#333333" : "#999999")};
	border-width: ${({ $active }) => ($active ? "0 1px 1px" : "0 1px 0 0")};
`

/* rounded marker laid over the quote list */
const StyledHighlight = styled.div`
	position: absolute;
	inset: -5px 12px 22px 1px;
	border: 6px solid #ff2d6c;
	border-radius: 6px;
	box-shadow: inset 0 0 5px rgba(0, 0, 0, 0.5), 0 1px 3px rgba(0, 0, 0, 0.4);
	pointer-events: none;
`

const StyledWorkspace = styled.section`
	display: flex;
	flex-direction: column;
	flex: 1;
	min-width: 0;
	border-left: 1px solid #77777b;
	border-top: 1px solid #66666a;
`

const StyledWindows = styled.div`
	display: grid;
	grid-template-columns: minmax(493px, 60%) 1fr;
	grid-template-rows: 1fr 1fr;
	flex: 1;
	min-height: 0;
	background: #777b80;
	overflow: hidden;
`

const StyledWindow = styled.article`
	display: flex;
	flex-direction: column;
	min-width: 0;
	min-height: 0;
	padding: 0 7px 6px 6px;
	border: 1px solid #4a4d52;
	border-right-color: ${({ $active }) => ($active ? "#35c3da" : "#4a4d52")};
	border-bottom-color: ${({ $active }) => ($active ? "#35c3da" : "#4a4d52")};
	border-radius: 4px 4px 0 0;
	background: ${({ $active }) =>
		$active
			? "linear-gradient(#96b1d0, #b9d1ea 40px)"
			: "linear-gradient(#bccad8, #d7e4f2 40px)"};
	&:nth-child(even) {
		padding-right: 0;
		border-right: 0;
	}
`

const StyledWindowBar = styled.header`
	display: flex;
	align-items: center;
	gap: 4px;
	height: 25px;
	padding: 4px 0 0 2px;
	flex-shrink: 0;
	color: ${({ $active }) => ($active ? "#2a3442" : "#9aa2ab")};
`

const StyledWindowButtons = styled.div`
	display: flex;
	gap: 2px;
	margin-left: auto;
`

const StyledWindowButton = styled.button`
	display: flex;
	align-items: center;
	justify-content: center;
	width: 25px;
	height: 14px;
	border: 1px solid ${({ $close }) => ($close ? "#7a3a3a" : "#8c9cb0")};
	border-radius: 2px;
	background: ${({ $close }) =>
		$close ? "linear-gradient(#e0a79c, #c2503c 50%, #cc6a50)" : "rgba(255, 255, 255, 0.2)"};
`

const StyledCanvas = styled.div`
	position: relative;
	flex: 1;
	min-height: 0;
	background: #000000;
	border-bottom: 1px solid #ffffff;
	overflow: hidden;
`

const StyledPlot = styled.svg`
	display: block;
	width: 100%;
	height: 100%;
	text {
		fill: #ffffff;
		font-family: "DejaVu Sans Condensed", "DejaVu Sans", sans-serif;
		font-size: 7px;
	}
	.last {
		fill: #000000;
	}
`

const StyledOneClick = styled.div`
	position: absolute;
	top: 16px;
	left: 5px;
	width: ${({ $narrow }) => ($narrow ? 153 : 157)}px;
	background: #000000;
	padding-bottom: 1px;
`

const StyledOrderRow = styled.div`
	display: flex;
	height: 18px;
`

const StyledSide = styled.button`
	width: 38px;
	border-radius: 2px 2px 0 0;
	background: ${({ $blue }) =>
		$blue
			? "linear-gradient(#2020b0, #2020b0) center bottom / 30px 1px no-repeat, linear-gradient(#5656fa, #3838ea)"
			: "linear-gradient(#a81818, #a81818) center bottom / 30px 1px no-repeat, linear-gradient(#fa5656, #e83838)"};
	&& {
		color: ${({ $blue }) => ($blue ? "#e2e2ff" : "#ffe2e2")};
	}
`

const StyledVolume = styled.div`
	display: flex;
	flex: 1;
	margin: 1px 2px 2px;
	background: #ffffff;
	button {
		display: flex;
		align-items: center;
		justify-content: center;
		width: 15px;
		background: #ececec;
	}
	input {
		flex: 1;
		width: 0;
		min-width: 0;
		padding-right: 2px;
		text-align: right;
	}
`

const StyledPriceRow = styled.div`
	display: flex;
	gap: 1px;
	height: 27px;
`

const StyledPrice = styled.button`
	display: flex;
	align-items: baseline;
	justify-content: center;
	gap: 4px;
	flex: 1;
	&& {
		color: #ffffff;
	}
	background: ${({ $blue }) =>
		$blue ? "linear-gradient(#3535e6, #0000a0)" : "linear-gradient(#e63333, #a80000)"};
	small {
		font-size: 9px;
		font-weight: 600;
	}
	strong {
		font-size: 24px;
		font-weight: 400;
		line-height: 27px;
	}
	sup {
		align-self: flex-start;
		font-size: 9px;
		line-height: 14px;
	}
`

const StyledTabs = styled.div`
	display: flex;
	align-items: flex-start;
	height: 22px;
	flex-shrink: 0;
	padding-left: 3px;
	border-top: 1px solid #55585c;
	background: linear-gradient(#efefef 17px, #f7f7f7 17px);
`

const StyledTab = styled.button`
	height: 16px;
	padding: 0 9px;
	${({ $active }) =>
		$active
			? css`
				margin-right: 1px;
				padding: 0 8px;
				border: 1px solid #333333;
				border-top: 0;
				background: #ffffff;
			`
			: css`
				background: linear-gradient(#999999, #999999) right center / 1px 10px no-repeat;
				&& {
					color: #8a8a8a;
				}
			`}
`

const StyledTabArrows = styled.div`
	display: flex;
	gap: 11px;
	margin-left: auto;
	padding: 5px 6px 0 0;
	button {
		display: flex;
	}
`

export default App
